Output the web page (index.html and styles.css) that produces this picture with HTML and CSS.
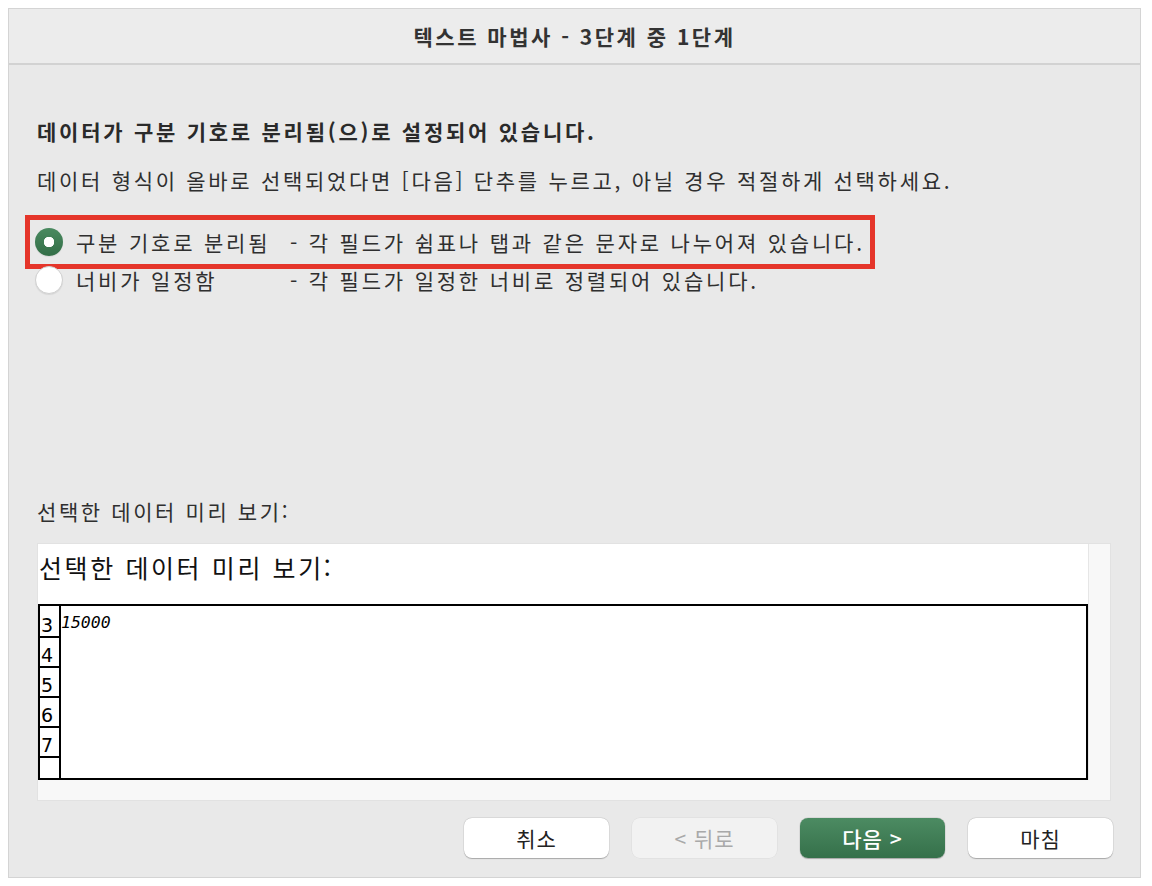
FILE: index.html
```html
<!DOCTYPE html>
<html lang="ko">
<head>
<meta charset="utf-8">
<title>텍스트 마법사</title>
<link rel="stylesheet" href="styles.css">
</head>
<body>
<div class="dialog">
  <div class="titlebar">텍스트 마법사 - 3단계 중 1단계</div>
  <div class="content">
    <div class="heading">데이터가 구분 기호로 분리됨(으)로 설정되어 있습니다.</div>
    <div class="sub">데이터 형식이 올바로 선택되었다면 [다음] 단추를 누르고, 아닐 경우 적절하게 선택하세요.</div>
    <div class="options">
      <div class="option highlighted">
        <span class="radio checked"></span>
        <span class="opt-label">구분 기호로 분리됨</span>
        <span class="opt-desc">- 각 필드가 쉼표나 탭과 같은 문자로 나누어져 있습니다.</span>
      </div>
      <div class="option">
        <span class="radio"></span>
        <span class="opt-label">너비가 일정함</span>
        <span class="opt-desc">- 각 필드가 일정한 너비로 정렬되어 있습니다.</span>
      </div>
    </div>
    <div class="preview-label">선택한 데이터 미리 보기:</div>
    <div class="preview">
      <div class="preview-main">
        <div class="preview-view">
          <div class="preview-title">선택한 데이터 미리 보기:</div>
          <div class="grid">
            <div class="row first"><span class="num">3</span><span class="cell">15000</span></div>
            <div class="row"><span class="num">4</span><span class="cell"></span></div>
            <div class="row"><span class="num">5</span><span class="cell"></span></div>
            <div class="row"><span class="num">6</span><span class="cell"></span></div>
            <div class="row"><span class="num">7</span><span class="cell"></span></div>
            <div class="row last"><span class="num"></span><span class="cell"></span></div>
          </div>
        </div>
        <div class="vscroll"></div>
      </div>
      <div class="hscroll"></div>
    </div>
    <div class="buttons">
      <button class="btn">취소</button>
      <button class="btn disabled">&lt; 뒤로</button>
      <button class="btn primary">다음 &gt;</button>
      <button class="btn">마침</button>
    </div>
  </div>
</div>
</body>
</html>
```
FILE: styles.css
```css
* { box-sizing: border-box; }
html, body { margin: 0; padding: 0; background: #ffffff; }
body {
  font-family: "Noto Sans CJK KR", "Noto Sans", sans-serif;
  color: #2b2b2b;
}
.dialog {
  margin: 8px;
  width: 1133px;
  height: 870px;
  border: 1px solid #d4d4d4;
  background: #e9e9e9;
  display: flex;
  flex-direction: column;
}
.titlebar {
  height: 56px;
  flex: none;
  background: #ececec;
  border-bottom: 2px solid #d2d2d2;
  display: flex;
  align-items: center;
  justify-content: center;
  font-size: 21px;
  font-weight: 700;
  letter-spacing: 2.5px;
  color: #333;
}
.content {
  flex: 1;
  padding: 0 27px 0 28px;
  display: flex;
  flex-direction: column;
}
.heading {
  margin-top: 52px;
  font-size: 21px;
  line-height: 28px;
  font-weight: 700;
  letter-spacing: 2.75px;
  color: #2a2a2a;
}
.sub {
  margin-top: 21px;
  font-size: 21px;
  line-height: 28px;
  letter-spacing: 2.7px;
  color: #2f2f2f;
}
.options {
  margin-top: 34px;
  margin-left: -2px;
  display: flex;
  flex-direction: column;
  align-items: flex-start;
  gap: 10px;
}
.option {
  position: relative;
  display: flex;
  align-items: center;
  height: 28px;
  font-size: 21px;
  letter-spacing: 2.8px;
  color: #2f2f2f;
}
.option.highlighted::after {
  content: "";
  position: absolute;
  left: -10px;
  right: -10px;
  top: -13px;
  bottom: -13px;
  border: 5px solid #e5352a;
  pointer-events: none;
}
.radio {
  width: 28px;
  height: 28px;
  border-radius: 50%;
  background: #fff;
  border: 1px solid #d0d0d0;
  flex: none;
  margin-right: 13px;
  box-shadow: 0 1px 1px rgba(0,0,0,0.08);
}
.radio.checked {
  border: none;
  background: radial-gradient(circle at 50% 50%, #ffffff 0 5px, transparent 5.5px), linear-gradient(#4a8a60, #336e47);
}
.opt-label {
  width: 214px;
  flex: none;
}
.opt-desc { flex: none; }
.preview-label {
  margin-top: 203px;
  font-size: 21px;
  line-height: 28px;
  letter-spacing: 2.6px;
  color: #2f2f2f;
}
.preview {
  margin-top: 18px;
  width: 1074px;
  background: #f8f8f8;
  border: 1px solid #e2e2e2;
  display: flex;
  flex-direction: column;
}
.preview-main {
  display: flex;
}
.preview-view {
  width: 1051px;
  background: #fff;
  border-right: 1px solid #e6e6e6;
  padding-top: 8px;
}
.preview-title {
  margin-left: 1px;
  font-size: 25px;
  line-height: 30px;
  letter-spacing: 2.6px;
  color: #111;
  height: 52px;
}
.grid {
  width: 1050px;
  border: 2px solid #000;
  background: #fff;
}
.row {
  display: flex;
  height: 30px;
}
.row.first { height: 32px; }
.row.last { height: 20px; }
.num {
  width: 21px;
  flex: none;
  border-right: 2px solid #000;
  border-bottom: 2px solid #000;
  font-family: "DejaVu Sans", sans-serif;
  font-size: 19px;
  line-height: 1;
  display: flex;
  align-items: flex-end;
  padding-left: 1px;
  padding-bottom: 1px;
  color: #000;
}
.row.last .num { border-bottom: none; }
.cell {
  flex: 1;
  font-family: "DejaVu Sans Mono", monospace;
  font-style: italic;
  font-size: 16.5px;
  line-height: 20px;
  padding-left: 0;
  padding-top: 7px;
  color: #000;
}
.vscroll { flex: 1; }
.hscroll { height: 20px; }
.buttons {
  margin-top: 17px;
  display: flex;
  justify-content: flex-end;
  gap: 23px;
}
.btn {
  width: 145px;
  height: 40px;
  border: none;
  border-radius: 8px;
  background: #ffffff;
  box-shadow: 0 0.5px 1px rgba(0,0,0,0.25), 0 0 0 0.5px rgba(0,0,0,0.08);
  font-family: "Noto Sans CJK KR", "Noto Sans", sans-serif;
  font-size: 21px;
  letter-spacing: 1px;
  color: #222;
  padding: 0;
}
.btn.disabled {
  background: #f2f2f2;
  color: #a9a9a9;
  box-shadow: 0 0 0 0.5px rgba(0,0,0,0.06);
}
.btn.primary {
  background: linear-gradient(#4c8b62, #35704a);
  color: #fff;
  font-weight: 500;
}
```
